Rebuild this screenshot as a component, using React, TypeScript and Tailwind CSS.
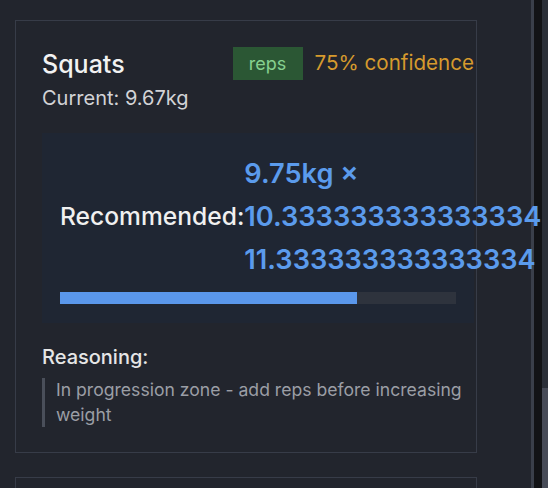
import React from "react"

const value = "9.75kg × 10.333333333333334 11.333333333333334"

function RecommendationCard() {
    return (
        <div className="w-[462px] shrink-0 border border-[#373c48] pl-[26px] pr-[2px] pt-[26px] pb-[25px]">
            <div className="flex items-start justify-between">
                <div>
                    <h3 className="text-[25px] leading-[34px] font-medium text-[#f2f2f2]">Squats</h3>
                    <p className="mt-[4px] text-[20px] leading-[27px] text-[#d2d3d6]">Current: 9.67kg</p>
                </div>
                <div className="flex items-center gap-3">
                    <span className="flex h-[33px] w-[70px] items-center justify-center bg-[#2b5734] text-[18px] text-[#86d18f]">reps</span>
                    <span className="text-[20.6px] text-[#d69a2d]">75% confidence</span>
                </div>
            </div>

            <div className="mt-[21px] w-[432px] bg-[#1f2633] px-[18px] pt-[19px] pb-[19px]">
                <div className="flex items-center">
                    <span className="text-[24.6px] font-medium text-[#f0f0f0]">Recommended:</span>
                    <span className="relative z-10 text-[27.2px] leading-[43px] font-semibold text-[#5b9bec]">{value}</span>
                </div>
                <div className="mt-[11px] h-[12px] w-full bg-[#2e333d]">
                    <div className="h-full bg-[#5a97eb]" style={{ width: "75%" }} />
                </div>
            </div>

            <div className="mt-[21px]">
                <p className="text-[20px] leading-[26px] font-medium text-[#e6e6e6]">Reasoning:</p>
                <div className="mt-[8px] border-l-[3px] border-[#4a4f5a] pl-[11px]">
                    <p className="text-[17.6px] leading-[24.5px] text-[#9b9ea5]">
                        In progression zone - add reps before increasing weight
                    </p>
                </div>
            </div>
        </div>
    )
}

export default function App() {
    return (
        <div
            className="flex h-[488px] w-[548px] overflow-hidden bg-[#22252d]"
            style={{ fontFamily: "Inter, 'Noto Sans', sans-serif" }}
        >
            <div className="flex w-[531px] flex-col gap-6 pl-[15px] pt-[20px]">
                <RecommendationCard />
                <div className="h-[60px] w-[462px] shrink-0 border border-[#373c48]" />
            </div>
            <div className="w-[3px] bg-[#3a3f4a]" />
            <div className="w-[8px] bg-[#121316]" />
            <div className="flex w-[6px] flex-col bg-[#2b2f38]">
                <div className="mt-[388px] flex-1 bg-[#474b57]" />
            </div>
        </div>
    )
}
